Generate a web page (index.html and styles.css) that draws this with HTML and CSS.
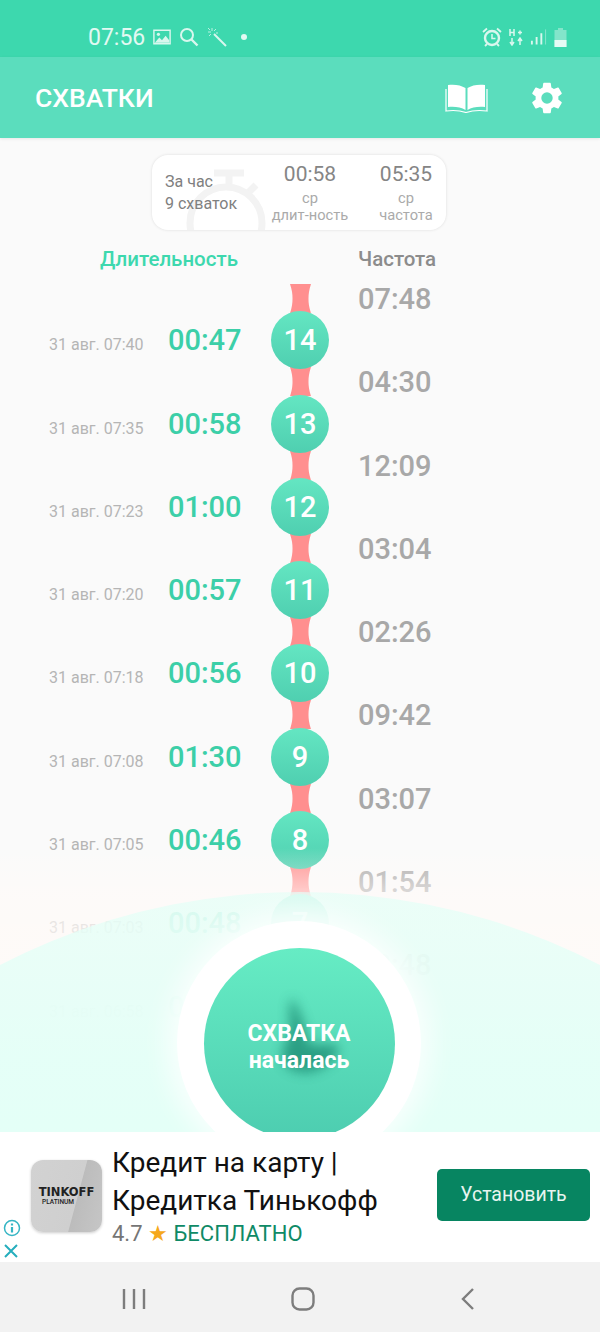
FILE: index.html
```html
<!DOCTYPE html>
<html lang="ru">
<head>
    <meta charset="UTF-8">
    <meta name="viewport" content="width=device-width, initial-scale=1.0">
    <title>Схватки</title>
    <link rel="stylesheet" href="styles.css">
</head>
<body>
    <!-- Shape of the pink link between two circles -->
    <svg class="defs" width="0" height="0">
        <symbol id="link-shape" viewBox="0 0 21 29.300">
            <path d="M0 0C2 6 2.500 10 2.500 14.650S2 23 0 29.300H21C19 23 18.500 19 18.500 14.650S19 6 21 0z" fill="#ff8f8f"/>
        </symbol>
    </svg>

    <div class="screen">
        <!-- Status bar -->
        <div class="status-bar">
            <div class="status-left">
                <span class="clock">07:56</span>
                <svg class="st-icon" width="18" height="16" viewBox="0 0 20 17"><path d="M1 1h18v15H1z" fill="none" stroke="#d9f7ee" stroke-width="1.6"/><path d="M2 15l5-6 3 3 4-5 4 5v3z" fill="#d9f7ee"/><circle cx="6" cy="5.5" r="1.8" fill="#d9f7ee"/></svg>
                <svg class="st-icon" width="20" height="20" viewBox="0 0 20 20"><circle cx="8" cy="8" r="6" fill="none" stroke="#d9f7ee" stroke-width="2"/><path d="M12.5 12.5l6 6" stroke="#d9f7ee" stroke-width="2.4"/></svg>
                <svg class="st-icon" width="20" height="20" viewBox="0 0 20 20"><path d="M7 7l12 12" stroke="#d9f7ee" stroke-width="2"/><path d="M5 1v3M1 5h3M9 2L7 4M2 9l2-2M1 1l2 2M9 6h2" stroke="#d9f7ee" stroke-width="1" opacity=".8"/></svg>
                <span class="dot"></span>
            </div>
            <div class="status-right">
                <svg width="20" height="20" viewBox="0 0 20 20"><circle cx="10" cy="11" r="7" fill="none" stroke="#d9f7ee" stroke-width="2.4"/><path d="M10 7v4.500h3.500" fill="none" stroke="#d9f7ee" stroke-width="1.500"/><path d="M1 5l4-3.500M19 5l-4-3.500M5 17l-2 2M15 17l2 2" stroke="#d9f7ee" stroke-width="1.800"/></svg>
                <svg width="14" height="18" viewBox="0 0 14 18"><path d="M1 1v7M5 1v7M1 4.500h4M9 4.500h4M11 2.500v4M3 10v7M1 14l2 3 2-3M11 10v7M9 13l2-3 2 3" fill="none" stroke="#d9f7ee" stroke-width="1.500"/></svg>
                <svg width="17" height="18" viewBox="0 0 18 18"><path d="M2 13v4M7 9v8M12 5v12" stroke="#d9f7ee" stroke-width="2"/><path d="M16.500 1v16" stroke="#d9f7ee" stroke-width="1" opacity=".5"/></svg>
                <svg width="13" height="19" viewBox="0 0 13 19"><path d="M4 0h5v2h3.500v17H.5V2H4z" fill="#d9f7ee" opacity=".45"/><path d="M.5 12h12v7H.5z" fill="#e6fbf5"/></svg>
            </div>
        </div>

        <!-- App bar -->
        <header class="app-bar">
            <h1 class="app-title">СХВАТКИ</h1>
            <div class="app-actions">
                <svg width="43" height="30" viewBox="0 0 43 30"><path d="M20.500 5C16 2 9 1 3 2v22c6-.8 13 0 17.500 3z" fill="#fff"/><path d="M22.500 5C27 2 34 1 40 2v22c-6-.8-13 0-17.500 3z" fill="#fff"/><path d="M1 6v22c7-1 14-.5 20 1.500 6-2 13-2.500 21-1.500V6" fill="none" stroke="#fff" stroke-width="1.200"/></svg>
                <svg width="38" height="38" viewBox="0 0 24 24"><path fill="#fff" d="M19.140 12.940c.04-.3.060-.61.060-.94 0-.32-.020-.64-.070-.94l2.030-1.580a.49.490 0 0 0 .120-.61l-1.920-3.320a.49.490 0 0 0-.590-.22l-2.390.96c-.5-.38-1.030-.7-1.620-.94l-.360-2.540a.48.480 0 0 0-.480-.41h-3.840a.48.480 0 0 0-.470.41l-.360 2.540c-.59.240-1.130.57-1.620.94l-2.390-.96a.49.490 0 0 0-.590.220L2.740 8.870a.48.480 0 0 0 .120.610l2.030 1.580c-.050.3-.090.630-.090.940s.020.640.070.940l-2.030 1.580a.49.490 0 0 0-.120.610l1.920 3.320c.120.220.370.290.590.220l2.390-.96c.5.380 1.030.7 1.620.94l.360 2.540c.050.240.240.41.480.41h3.840c.24 0 .44-.170.470-.41l.360-2.540c.59-.240 1.130-.56 1.620-.94l2.390.96c.220.080.470 0 .590-.220l1.920-3.320a.47.470 0 0 0-.120-.610l-2.010-1.580zM12 15.600A3.600 3.600 0 1 1 12 8.400a3.600 3.600 0 0 1 0 7.200z"/></svg>
            </div>
        </header>

        <main class="content">
            <!-- Summary card -->
            <section class="summary">
                <svg class="summary-watch" width="110" height="75" viewBox="0 0 110 75"><path d="M50 12h30M65 12v12M92 24l-8 8" stroke="#f3f3f3" stroke-width="7" fill="none"/><circle cx="62" cy="62" r="36" fill="none" stroke="#f3f3f3" stroke-width="7"/></svg>
                <div class="summary-total">За час<br>9 схваток</div>
                <div class="summary-col summary-dur">
                    <div class="summary-value">00:58</div>
                    <div class="summary-label">ср<br>длит-ность</div>
                </div>
                <div class="summary-col summary-freq">
                    <div class="summary-value">05:35</div>
                    <div class="summary-label">ср<br>частота</div>
                </div>
            </section>

            <div class="columns">
                <!-- Contractions list -->
                <section class="history">
                    <div class="head-duration">Длительность</div>
                    <div class="row">
                        <span class="row-date">31 авг. 07:40</span><span class="row-time">00:47</span>
                        <div class="node"><svg class="link"><use href="#link-shape"/></svg><div class="bubble">14</div></div>
                    </div>
                    <div class="row">
                        <span class="row-date">31 авг. 07:35</span><span class="row-time">00:58</span>
                        <div class="node"><svg class="link"><use href="#link-shape"/></svg><div class="bubble">13</div></div>
                    </div>
                    <div class="row">
                        <span class="row-date">31 авг. 07:23</span><span class="row-time">01:00</span>
                        <div class="node"><svg class="link"><use href="#link-shape"/></svg><div class="bubble">12</div></div>
                    </div>
                    <div class="row">
                        <span class="row-date">31 авг. 07:20</span><span class="row-time">00:57</span>
                        <div class="node"><svg class="link"><use href="#link-shape"/></svg><div class="bubble">11</div></div>
                    </div>
                    <div class="row">
                        <span class="row-date">31 авг. 07:18</span><span class="row-time">00:56</span>
                        <div class="node"><svg class="link"><use href="#link-shape"/></svg><div class="bubble">10</div></div>
                    </div>
                    <div class="row">
                        <span class="row-date">31 авг. 07:08</span><span class="row-time">01:30</span>
                        <div class="node"><svg class="link"><use href="#link-shape"/></svg><div class="bubble">9</div></div>
                    </div>
                    <div class="row">
                        <span class="row-date">31 авг. 07:05</span><span class="row-time">00:46</span>
                        <div class="node"><svg class="link"><use href="#link-shape"/></svg><div class="bubble">8</div></div>
                    </div>
                    <div class="row">
                        <span class="row-date">31 авг. 07:03</span><span class="row-time">00:48</span>
                        <div class="node"><svg class="link"><use href="#link-shape"/></svg><div class="bubble">7</div></div>
                    </div>
                    <div class="row">
                        <span class="row-date">31 авг. 06:58</span><span class="row-time">00:50</span>
                    </div>
                </section>

                <!-- Frequency column -->
                <section class="freqs">
                    <div class="head-freq">Частота</div>
                    <div class="freq">07:48</div>
                    <div class="freq">04:30</div>
                    <div class="freq">12:09</div>
                    <div class="freq">03:04</div>
                    <div class="freq">02:26</div>
                    <div class="freq">09:42</div>
                    <div class="freq">03:07</div>
                    <div class="freq">01:54</div>
                    <div class="freq">02:48</div>
                </section>
            </div>

            <!-- Bottom dome with the big button -->
            <div class="fade"></div>
            <div class="dome"></div>
            <div class="start-ring">
                <div class="start-btn">
                    <svg class="start-hand" width="130" height="130" viewBox="0 0 130 130"><path d="M58 22c8 14 14 30 16 44 4 6 22 0 30 4 2 12-12 22-26 26-14 2-28-2-30-16 2-14 8-18 8-30 0-10-2-20 2-28z" fill="#1f8f76"/></svg>
                    <div class="start-text">СХВАТКА<br><span class="start-sub">началась</span></div>
                </div>
            </div>
        </main>

        <!-- Ad banner -->
        <aside class="ad">
            <div class="ad-marks">
                <svg width="18" height="18" viewBox="0 0 18 18"><circle cx="9" cy="9" r="7.500" fill="none" stroke="#35b5c4" stroke-width="1.500"/><path d="M9 8v5.500M9 4.500v2" stroke="#35b5c4" stroke-width="2.200"/></svg>
                <svg width="16" height="16" viewBox="0 0 16 16"><path d="M2 2l12 12M14 2L2 14" stroke="#25aebd" stroke-width="2"/></svg>
            </div>
            <div class="ad-logo">
                <div class="ad-logo-name">TINKOFF</div>
                <div class="ad-logo-sub">PLATINUM</div>
            </div>
            <div class="ad-body">
                <div class="ad-title">Кредит на карту |<br>Кредитка Тинькофф</div>
                <div class="ad-meta">4.7 <span class="ad-star">★</span> <span class="ad-free">БЕСПЛАТНО</span></div>
            </div>
            <div class="ad-btn">Установить</div>
        </aside>

        <!-- Navigation bar -->
        <nav class="nav-bar">
            <svg width="24" height="24" viewBox="0 0 24 24"><path d="M2 2v20M12 2v20M22 2v20" stroke="#7d7d7d" stroke-width="2.400"/></svg>
            <svg width="24" height="24" viewBox="0 0 24 24"><rect x="1.500" y="1.500" width="21" height="21" rx="7" fill="none" stroke="#7d7d7d" stroke-width="2.400"/></svg>
            <svg width="16" height="24" viewBox="0 0 16 24"><path d="M13 2L3 12l10 10" fill="none" stroke="#7d7d7d" stroke-width="2.400"/></svg>
        </nav>
    </div>
</body>
</html>
```
FILE: styles.css
```css
/* General styling */
html, body {
    margin: 0;
    padding: 0;
    height: 100%;
    font-family: Roboto, "Noto Sans", sans-serif;
}

.defs {
    display: block;
    height: 0;
}

.screen {
    width: 600px;
    height: 1332px;
    display: flex;
    flex-direction: column;
    overflow: hidden;
    background: #fafafa;
}

/* Status bar */
.status-bar {
    height: 57px;
    flex: none;
    display: flex;
    align-items: center;
    justify-content: space-between;
    padding: 17px 33px 0 88px;
    box-sizing: border-box;
    background: #3dd8ae;
}

.status-left, .status-right {
    display: flex;
    align-items: center;
}

.status-left {
    gap: 8px;
}

.status-right {
    gap: 7px;
}

.clock {
    font-size: 23px;
    color: #e2f9f2;
}

.dot {
    width: 6px;
    height: 6px;
    margin-left: 6px;
    border-radius: 50%;
    background: #e2f9f2;
}

/* App bar */
.app-bar {
    height: 81px;
    flex: none;
    display: flex;
    align-items: center;
    justify-content: space-between;
    padding: 0 34px 0 35px;
    box-sizing: border-box;
    background: #5bddbd;
    box-shadow: 0 1px 3px rgba(0, 0, 0, 0.08);
    position: relative;
    z-index: 2;
}

.app-title {
    margin: 0;
    font-size: 26.500px;
    font-weight: 500;
    color: #fff;
}

.app-actions {
    display: flex;
    align-items: center;
    gap: 40px;
}

/* Main content */
.content {
    flex: 1;
    position: relative;
    overflow: hidden;
}

.summary {
    position: relative;
    overflow: hidden;
    width: 294px;
    height: 75px;
    margin: 17px 0 0 152px;
    box-sizing: border-box;
    border-radius: 16px;
    background: #fff;
    box-shadow: 0 0 3px rgba(0, 0, 0, 0.12);
    color: #8a8a8a;
}

.summary-watch {
    position: absolute;
    left: 12px;
    top: 6px;
}

.summary-total {
    position: absolute;
    left: 13px;
    top: 16px;
    font-size: 16px;
    line-height: 22px;
    color: #808080;
}

.summary-col {
    position: absolute;
    top: 7px;
    text-align: center;
}

.summary-dur {
    left: 108px;
    width: 100px;
}

.summary-freq {
    left: 204px;
    width: 100px;
}

.summary-value {
    font-size: 21px;
    line-height: 25px;
    color: #858585;
}

.summary-label {
    font-size: 14.700px;
    line-height: 17px;
    margin-top: 3px;
    color: #aaa;
}

/* Two columns of the list */
.columns {
    display: flex;
    margin-top: 15px;
}

.history {
    width: 358px;
    flex: none;
}

.head-duration {
    height: 41px;
    padding-left: 100px;
    font-size: 20.500px;
    font-weight: 500;
    line-height: 28px;
    color: #3dd8ae;
}

.row {
    height: 83.3px;
    display: flex;
    align-items: flex-end;
}

.row-date {
    width: 168px;
    height: 58px;
    flex: none;
    box-sizing: border-box;
    padding-left: 49px;
    font-size: 16px;
    line-height: 68px;
    color: #b5b5b5;
}

.row-time {
    width: 103px;
    height: 58px;
    flex: none;
    font-size: 29px;
    font-weight: 500;
    line-height: 58px;
    color: #3ccfa8;
}

.node {
    width: 58px;
    display: flex;
    flex-direction: column;
    align-items: center;
}

/* the pink link narrows in the middle, its ends go under the circles */
.link {
    width: 21px;
    height: 29.300px;
    margin: -2px 0;
    flex: none;
}

.bubble {
    position: relative;
    width: 58px;
    height: 58px;
    border-radius: 50%;
    background: linear-gradient(#64e6c2, #4fcfb0);
    font-size: 29px;
    font-weight: 500;
    line-height: 58px;
    text-align: center;
    color: #fff;
}

.head-freq {
    height: 37px;
    font-size: 20.500px;
    font-weight: 500;
    line-height: 28px;
    color: #8c8c8c;
}

.freq {
    height: 83.300px;
    font-size: 29px;
    font-weight: 500;
    line-height: 34px;
    color: #a8a8a8;
}

/* Overlays at the bottom of the list */
.fade {
    position: absolute;
    left: 0;
    right: 0;
    top: 710px;
    height: 300px;
    background: linear-gradient(rgba(253, 250, 248, 0), rgba(255, 250, 248, 0.55) 14%, rgba(255, 250, 247, 0.72) 27%, rgba(255, 250, 247, 0.9));
}

.dome {
    position: absolute;
    left: -353px;
    top: 754px;
    width: 1306px;
    height: 1306px;
    border-radius: 50%;
    background: linear-gradient(rgba(228, 255, 247, 0.7), rgba(228, 255, 247, 0.97) 170px, #e4fff7 240px);
}

.start-ring {
    position: absolute;
    left: 177px;
    top: 783px;
    width: 244px;
    height: 244px;
    display: flex;
    align-items: center;
    justify-content: center;
    border-radius: 50%;
    background: #fff;
    box-shadow: 0 0 26px 10px rgba(255, 255, 255, 0.75);
}

.start-btn {
    position: relative;
    width: 191px;
    height: 191px;
    overflow: hidden;
    border-radius: 50%;
    background: linear-gradient(#66ecc4, #4dcdb0);
    display: flex;
    align-items: center;
    justify-content: center;
}

.start-hand {
    position: absolute;
    left: 30px;
    top: 28px;
    opacity: 0.8;
    filter: blur(6px);
}

.start-text {
    position: relative;
    padding-top: 7px;
    font-size: 23px;
    font-weight: 700;
    line-height: 27px;
    text-align: center;
    color: #fff;
}

/* Ad banner */
.ad {
    height: 130px;
    flex: none;
    position: relative;
    z-index: 2;
    display: flex;
    align-items: flex-start;
    background: #fff;
}

.ad-marks {
    position: absolute;
    left: 3px;
    bottom: 3px;
    display: flex;
    flex-direction: column;
    gap: 6px;
}

.ad-logo {
    width: 71px;
    height: 72px;
    flex: none;
    box-sizing: border-box;
    margin: 28px 10px 0 31px;
    padding-top: 26px;
    border-radius: 12px;
    background: linear-gradient(105deg, #d2d2d2 0, #cfcfcf 62%, #bcbcbc 63%, #c6c6c6);
    box-shadow: 0 1px 3px rgba(0, 0, 0, 0.2);
    text-align: center;
    color: #222;
}

.ad-logo-name {
    font-family: "DejaVu Sans", sans-serif;
    font-size: 11.500px;
    font-weight: 700;
    line-height: 12px;
}

.ad-logo-sub {
    padding-left: 11px;
    font-size: 6.500px;
    font-weight: 500;
    line-height: 9px;
    text-align: left;
}

.ad-body {
    width: 325px;
    flex: none;
}

.ad-title {
    margin-top: 12px;
    font-size: 28px;
    line-height: 38px;
    color: #111;
}

.ad-meta {
    font-size: 22px;
    line-height: 28px;
    color: #757575;
}

.ad-star {
    color: #f5a81c;
}

.ad-free {
    color: #0f8a66;
}

.ad-btn {
    width: 153px;
    height: 52px;
    margin-top: 37px;
    border-radius: 5px;
    background: #078561;
    font-size: 19.500px;
    line-height: 52px;
    text-align: center;
    color: #e8f5f0;
}

/* Navigation bar */
.nav-bar {
    height: 70px;
    flex: none;
    display: flex;
    align-items: center;
    justify-content: space-between;
    padding: 4px 124px 0 122px;
    box-sizing: border-box;
    background: #f2f2f2;
}
```
